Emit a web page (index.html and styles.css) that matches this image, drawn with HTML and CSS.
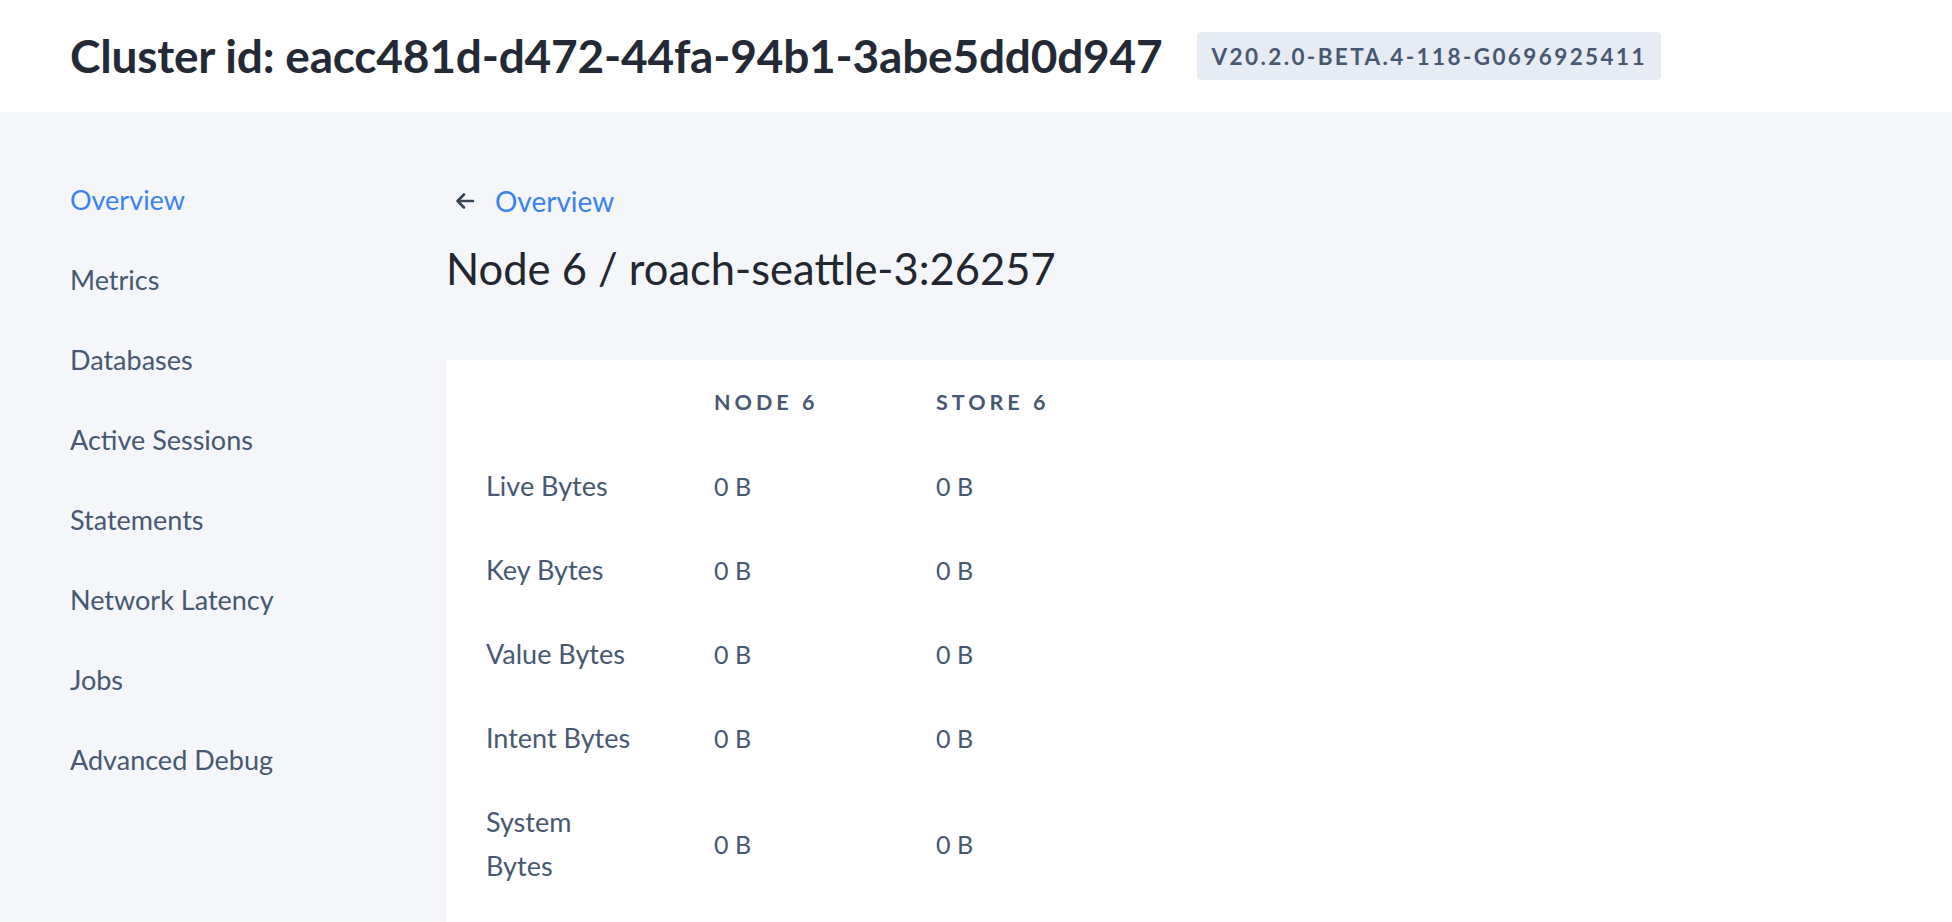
FILE: index.html
```html
<!DOCTYPE html>
<html lang="en">
<head>
<meta charset="utf-8">
<title>Node 6 / roach-seattle-3:26257</title>
<link rel="stylesheet" href="styles.css">
</head>
<body>
<header class="topbar">
  <h1 class="cluster-title">Cluster id: eacc481d-d472-44fa-94b1-3abe5dd0d947</h1>
  <span class="version-badge">V20.2.0-BETA.4-118-G0696925411</span>
</header>
<div class="layout">
  <nav class="sidebar">
    <a class="nav-item nav-item--active" href="#">Overview</a>
    <a class="nav-item" href="#">Metrics</a>
    <a class="nav-item" href="#">Databases</a>
    <a class="nav-item" href="#">Active Sessions</a>
    <a class="nav-item" href="#">Statements</a>
    <a class="nav-item" href="#">Network Latency</a>
    <a class="nav-item" href="#">Jobs</a>
    <a class="nav-item" href="#">Advanced Debug</a>
  </nav>
  <main class="content">
    <div class="breadcrumb">
      <svg class="back-icon" viewBox="0 0 24 24" width="24" height="24" aria-hidden="true">
        <path d="M20 12H5M11 5.5L4.5 12l6.5 6.5" fill="none" stroke="#394455" stroke-width="2.6" stroke-linecap="round" stroke-linejoin="round"/>
      </svg>
      <a class="breadcrumb-link" href="#">Overview</a>
    </div>
    <h2 class="page-title">Node 6 / roach-seattle-3:26257</h2>
    <section class="card">
      <div class="stats-table">
        <div class="cell head"></div>
        <div class="cell head">Node 6</div>
        <div class="cell head">Store 6</div>

        <div class="cell label"><span>Live Bytes</span></div>
        <div class="cell value">0 B</div>
        <div class="cell value">0 B</div>

        <div class="cell label"><span>Key Bytes</span></div>
        <div class="cell value">0 B</div>
        <div class="cell value">0 B</div>

        <div class="cell label"><span>Value Bytes</span></div>
        <div class="cell value">0 B</div>
        <div class="cell value">0 B</div>

        <div class="cell label"><span>Intent Bytes</span></div>
        <div class="cell value">0 B</div>
        <div class="cell value">0 B</div>

        <div class="cell label"><span>System Bytes</span></div>
        <div class="cell value">0 B</div>
        <div class="cell value">0 B</div>
      </div>
    </section>
  </main>
</div>
</body>
</html>
```

FILE: styles.css
```css
* { box-sizing: border-box; }
html, body { margin: 0; padding: 0; }
body {
  font-family: Lato, "Open Sans", sans-serif;
  color: #475872;
  background: #f5f6fa;
  height: 922px;
  overflow: hidden;
}
a { text-decoration: none; }

.topbar {
  height: 112px;
  background: #ffffff;
  display: flex;
  align-items: center;
  padding-left: 70px;
  gap: 34px;
}
.cluster-title {
  margin: 0;
  font-size: 46px;
  font-weight: 700;
  color: #242a35;
  line-height: 1;
  letter-spacing: -0.2px;
}
.version-badge {
  height: 48px;
  display: inline-flex;
  align-items: center;
  padding: 0 14px 0 15px;
  background: #e7ebf3;
  border-radius: 4px;
  font-size: 22.5px;
  font-weight: 700;
  letter-spacing: 2.4px;
  color: #475872;
}

.layout {
  display: flex;
  height: 810px;
}
.sidebar {
  width: 446px;
  flex: none;
  padding: 48px 0 0 70px;
  display: flex;
  flex-direction: column;
}
.nav-item {
  height: 80px;
  line-height: 80px;
  font-size: 27px;
  color: #475872;
}
.nav-item--active { color: #3a83f0; }

.content {
  flex: 1;
  display: flex;
  flex-direction: column;
  padding-top: 69px;
}
.breadcrumb {
  display: flex;
  align-items: center;
  height: 40px;
  padding-left: 7px;
  gap: 18px;
}
.back-icon { display: block; }
.breadcrumb-link {
  font-size: 28px;
  color: #3a83f0;
  line-height: 40px;
}
.page-title {
  margin: 17px 0 0 0;
  font-size: 43.5px;
  font-weight: 400;
  line-height: 60px;
  color: #22262e;
}
.card {
  margin-top: 62px;
  flex: 1;
  background: #ffffff;
}
.stats-table {
  display: grid;
  grid-template-columns: 228px 222px auto;
  padding-left: 40px;
}
.cell {
  padding: 20px 0;
  line-height: 44px;
  display: flex;
  align-items: center;
}
.head {
  font-size: 21.5px;
  font-weight: 700;
  text-transform: uppercase;
  letter-spacing: 4px;
}
.label span {
  font-size: 27px;
  max-width: 150px;
}
.value {
  font-size: 25px;
}
```
